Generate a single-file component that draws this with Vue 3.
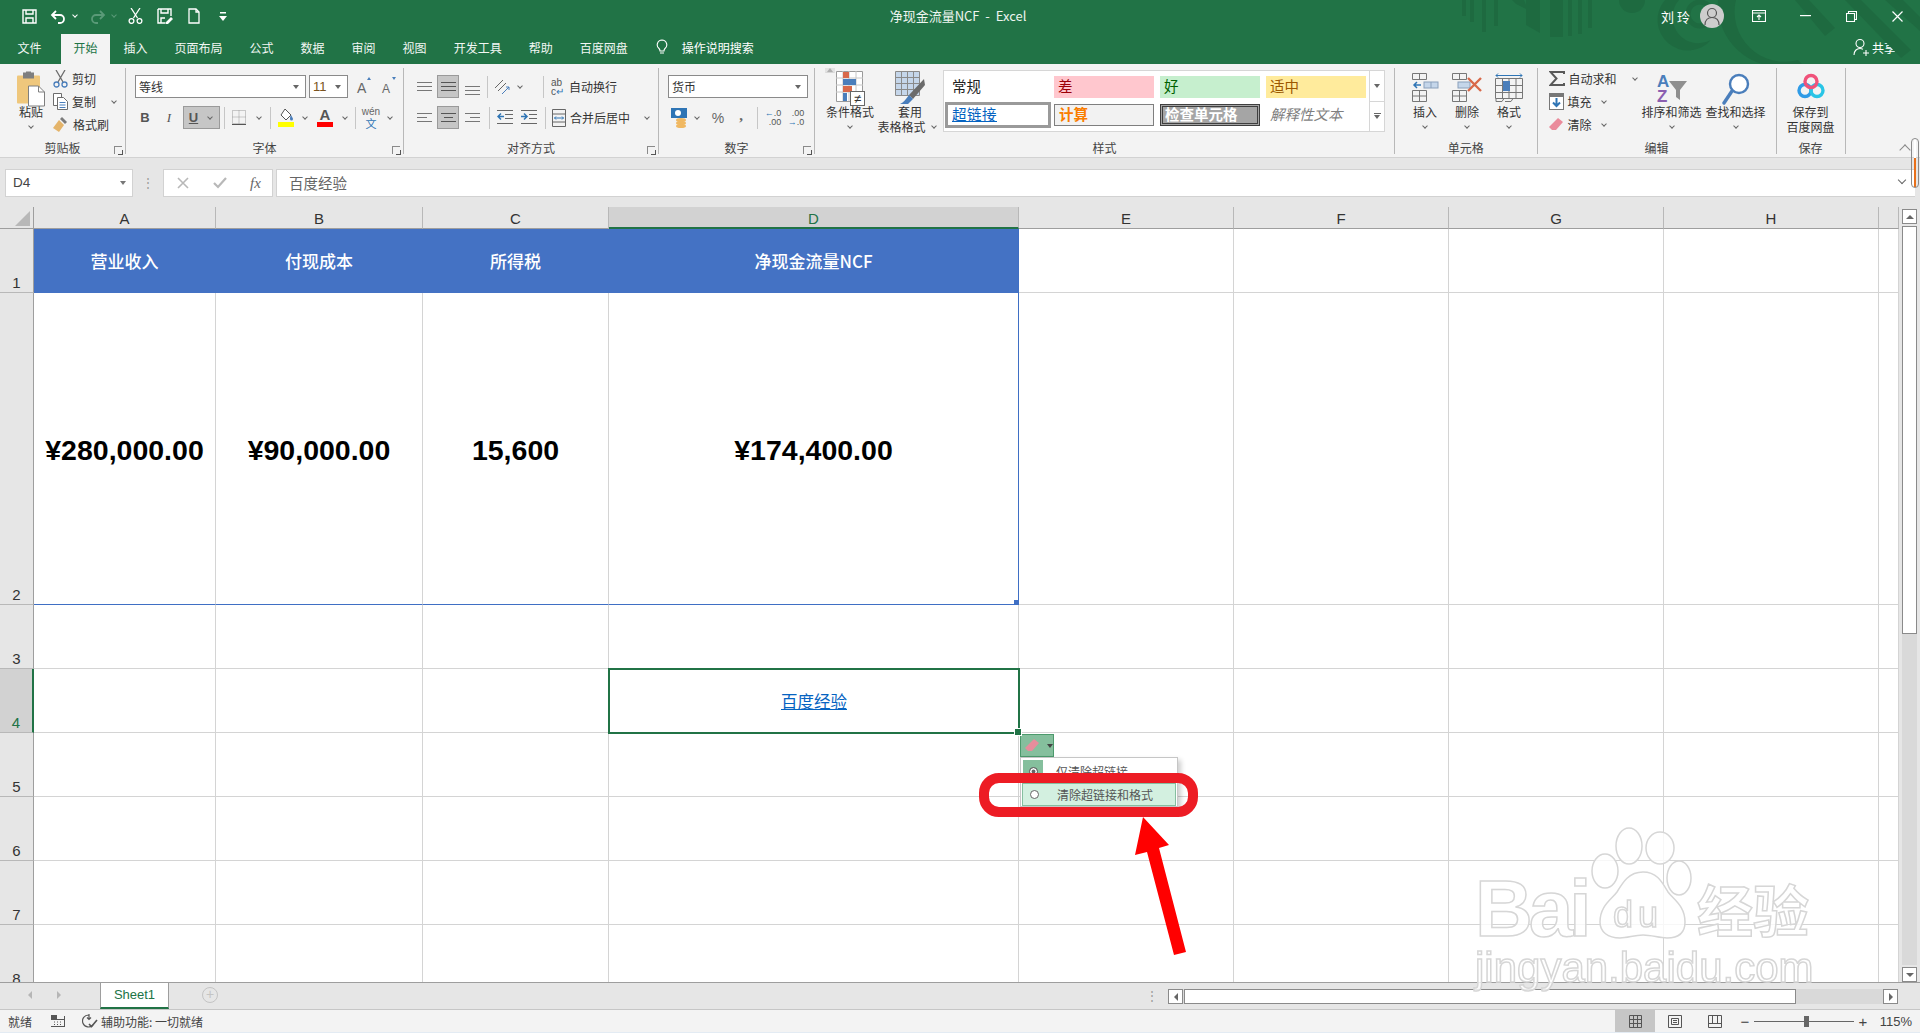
<script setup>
const cols = ['A', 'B', 'C', 'D', 'E', 'F', 'G', 'H', '']
const rows = [1, 2, 3, 4, 5, 6, 7, 8]

const content = {
  A1: '营业收入',
  B1: '付现成本',
  C1: '所得税',
  D1: '净现金流量NCF',
  A2: '¥280,000.00',
  B2: '¥90,000.00',
  C2: '15,600',
  D2: '¥174,400.00'
}

const tabs = ['插入', '页面布局', '公式', '数据', '审阅', '视图', '开发工具', '帮助', '百度网盘']

function cellClass(c, r) {
  const inRange = ['A', 'B', 'C', 'D'].includes(c)
  return {
    'head-cell': inRange && r === 1,
    'value-cell': inRange && r === 2,
    'range-right': c === 'D' && r <= 2,
    'active-cell': c === 'D' && r === 4
  }
}
</script>

<template>
  <div class="app">
    <!-- title bar -->
    <div class="titlebar">
      <svg class="deco" width="460" height="64" viewBox="0 0 460 64" fill="#1e6a40">
        <rect x="2" y="0" width="4" height="16" /><rect x="10" y="0" width="4" height="22" /><rect x="22" y="0" width="4" height="32" />
        <rect x="34" y="0" width="4" height="26" /><path d="M52 0h12l4 10-12-6z" /><path d="M66 0h14v33l-14-8z" />
        <rect x="90" y="0" width="13" height="37" /><rect x="108" y="0" width="4" height="36" /><rect x="118" y="0" width="4" height="34" /><rect x="128" y="0" width="4" height="28" />
        <circle cx="172" cy="0" r="13" />
        <path d="M205 0h14a26 26 0 0 0 32 40 30 30 0 0 1-46-40z" />
        <circle cx="240" cy="14" r="12" fill="none" stroke="#1e6a40" stroke-width="5" />
        <path d="M258 0h18a50 50 0 0 0 62 60l4 4h-40a62 62 0 0 1-44-64z" />
        <path d="M335 0h14l26 28-10 8z" /><path d="M385 0h16l50 50-10 8z" /><path d="M425 0h18l17 17v14z" />
      </svg>
      <div class="qat">
        <span class="qa">
          <svg width="15" height="15" viewBox="0 0 15 15" fill="none" stroke="#fff" stroke-width="1.4"><path d="M1 1h13v13H1z" /><path d="M4 1v4h7V1M4 14V9h7v5" /></svg>
        </span>
        <span class="qa">
          <svg width="17" height="15" viewBox="0 0 17 15" fill="none" stroke="#fff" stroke-width="1.8"><path d="M6 2L2 6l4 4M2 6h8a4 4 0 0 1 0 8H8" /></svg>
        </span>
        <span class="cw qa-c light"></span>
        <span class="qa dim">
          <svg width="17" height="15" viewBox="0 0 17 15" fill="none" stroke="#5a9a78" stroke-width="1.8"><path d="M11 2l4 4-4 4M15 6H7a4 4 0 0 0 0 8h2" /></svg>
        </span>
        <span class="cw qa-c dimc"></span>
        <span class="qa">
          <svg width="15" height="16" viewBox="0 0 15 16" fill="none" stroke="#fff" stroke-width="1.3"><path d="M3 0l6.5 10M12 0L5.500 10" /><circle cx="3.500" cy="13" r="2.400" /><circle cx="11.500" cy="13" r="2.400" /></svg>
        </span>
        <span class="qa">
          <svg width="16" height="16" viewBox="0 0 16 16" fill="none" stroke="#fff" stroke-width="1.4"><path d="M1 1h13v7M1 1v14h7" /><path d="M4 1v4h7V1M4 15v-5h4" /><path d="M9 15l5-5 1 1-5 5z" fill="#fff" /></svg>
        </span>
        <span class="qa">
          <svg width="12" height="16" viewBox="0 0 12 16" fill="none" stroke="#fff" stroke-width="1.3"><path d="M1 1h7l3 3v11H1z" /><path d="M8 1v3h3" /></svg>
        </span>
        <span class="qa">
          <svg width="8" height="9" viewBox="0 0 8 9" fill="#fff"><rect x="1" y="0" width="6" height="1.500" /><path d="M0 4h8L4 9z" /></svg>
        </span>
      </div>
      <div class="doc-title">{{ '净现金流量NCF  -  Excel' }}</div>
      <div class="win-controls">
        <span class="user">刘 玲</span>
        <span class="avatar">
          <svg width="24" height="24" viewBox="0 0 24 24" fill="none" stroke="#555" stroke-width="1.200"><circle cx="12" cy="9" r="4.500" /><path d="M5 21c0-5 3-7.500 7-7.500s7 2.500 7 7.500" /></svg>
        </span>
        <span class="wc first">
          <svg width="14" height="12" viewBox="0 0 14 12" fill="none" stroke="#fff" stroke-width="1.100"><path d="M.5.500h13v11H.5zM.5 3h13" /><path d="M7 10V5M5 7l2-2 2 2" /></svg>
        </span>
        <span class="wc">
          <svg width="11" height="2" viewBox="0 0 11 2"><rect width="11" height="1.200" fill="#fff" /></svg>
        </span>
        <span class="wc">
          <svg width="11" height="11" viewBox="0 0 11 11" fill="none" stroke="#fff" stroke-width="1.100"><path d="M.5 2.500h8v8h-8zM2.500 2.500v-2h8v8h-2" /></svg>
        </span>
        <span class="wc">
          <svg width="11" height="11" viewBox="0 0 11 11" stroke="#fff" stroke-width="1.200"><path d="M.5.500l10 10M10.500.500l-10 10" /></svg>
        </span>
      </div>
    </div>

    <!-- tabs -->
    <div class="tabbar">
      <span class="rtab file">文件</span>
      <span class="rtab active">开始</span>
      <span class="rtab" v-for="t in tabs" :key="t">{{ t }}</span>
      <span class="tell">
        <svg width="12" height="16" viewBox="0 0 12 16" fill="none" stroke="#fff" stroke-width="1.100"><path d="M6 1a4.800 4.800 0 0 0-3 8.500c.7.700 1 1.500 1 2.500h4c0-1 .3-1.800 1-2.500A4.800 4.800 0 0 0 6 1zM4 14h4" /></svg>
        操作说明搜索
      </span>
      <span class="share">
        <svg width="16" height="18" viewBox="0 0 16 18" fill="none" stroke="#fff" stroke-width="1.100"><circle cx="7" cy="5.500" r="4" /><path d="M1 17c0-4 2.500-6.500 6-6.500 1.200 0 2 .3 3 .8M10 15h6M13 12v6" /></svg>
        共享
      </span>
    </div>

    <!-- ribbon -->
    <div class="ribbon">
      <div class="group" style="width:126px">
        <div class="body clip">
          <div class="big paste">
            <svg width="28" height="36" viewBox="0 0 28 36">
              <rect x="0" y="4" width="23" height="28" rx="1" fill="#efc77c" />
              <rect x="6" y="1" width="11" height="6" fill="#7f7f7f" />
              <rect x="9" y="0" width="5" height="3" fill="#7f7f7f" />
              <path d="M11.500 14.500h10l6 6v14h-16z" fill="#fff" stroke="#7f7f7f" />
              <path d="M21.500 14.500v6h6" fill="none" stroke="#7f7f7f" />
            </svg>
            <span class="lbl">粘贴</span>
            <span class="cw"></span>
          </div>
          <div class="small-col">
            <div class="sm">
              <svg width="15" height="18" viewBox="0 0 15 18" fill="none" stroke-width="1.300"><path d="M3 0l7 12M12 0L5 12" stroke="#6d6d6d" /><circle cx="3.500" cy="14.500" r="2.500" stroke="#4a7ebb" /><circle cx="11.500" cy="14.500" r="2.500" stroke="#4a7ebb" /></svg>
              <span>剪切</span>
            </div>
            <div class="sm">
              <svg width="15" height="17" viewBox="0 0 15 17" fill="#fff" stroke="#6d6d6d"><path d="M.5.500h8v12h-8z" /><path d="M4.500 4.500h6l4 4v8h-10z" /><path d="M6.500 9.500h6M6.500 12h6M6.500 14.500h6" stroke="#4a7ebb" /></svg>
              <span>复制</span>
              <span class="cw copy-c"></span>
            </div>
            <div class="sm">
              <svg width="16" height="16" viewBox="0 0 16 16"><path d="M9 0l5 5-2 2-5-5z" fill="#7b7b7b" /><path d="M6 3l5 5-5 7-6-4z" fill="#e4b46a" /></svg>
              <span>格式刷</span>
            </div>
          </div>
        </div>
        <div class="glabel">剪贴板<i class="launch"></i></div>
      </div>

      <div class="group" style="width:278px">
        <div class="body stack">
          <div class="line">
            <div class="combo" style="width:171px">等线<i class="tri"></i></div>
            <div class="combo size" style="width:39px">11<i class="tri"></i></div>
            <span class="grow-a">A<i class="up"></i></span>
            <span class="grow-a small-a">A<i class="down"></i></span>
          </div>
          <div class="line">
            <span class="tb b" style="width:20px">B</span>
            <span class="tb i" style="width:28px">I</span>
            <span class="tb on u" style="width:37px"><u>U</u><span class="cw"></span></span>
            <i class="vsep" style="margin-left:4px"></i>
            <span class="tb" style="width:28px">
              <svg width="14" height="15" viewBox="0 0 14 15" fill="none" stroke="#9a9a9a" stroke-dasharray="1 1"><path d="M.5.500h13v13H.5zM7 .5v13M.5 7h13" /><path d="M0 14.500h14" stroke="#555" stroke-dasharray="none" /></svg>
            </span>
            <span class="cw" style="width:12px"></span>
            <i class="vsep" style="margin-left:5px"></i>
            <span class="tb" style="width:30px">
              <svg width="16" height="19" viewBox="0 0 16 19"><path d="M7 1l6 6-5 5-5-5z" fill="#fff" stroke="#555" /><path d="M13 7c1 2 2 3 2 4a1.500 1.500 0 0 1-3 0c0-1 0-2 1-4z" fill="#4a7ebb" /><rect y="14" width="16" height="5" fill="#ffff00" /></svg>
            </span>
            <span class="cw"></span>
            <span class="tb" style="width:32px">
              <svg width="16" height="19" viewBox="0 0 16 19"><text x="8" y="12" text-anchor="middle" class="font-a">A</text><rect y="14" width="16" height="5" fill="#ff0000" /></svg>
            </span>
            <span class="cw"></span>
            <i class="vsep" style="margin-left:6px"></i>
            <span class="tb wen" style="width:30px"><small>wén</small><b>文</b></span>
            <span class="cw"></span>
          </div>
        </div>
        <div class="glabel">字体<i class="launch"></i></div>
      </div>

      <div class="group" style="width:255px">
        <div class="body stack">
          <div class="line">
            <span class="ab"><svg width="15" height="10" viewBox="0 0 15 10" stroke="#777"><path d="M0 .5h15M0 4.500h15M0 8.500h15" /></svg></span>
            <span class="ab on"><svg width="15" height="10" viewBox="0 0 15 10" stroke="#555"><path d="M0 .5h15M0 4.500h15M0 8.500h15" /></svg></span>
            <span class="ab low"><svg width="15" height="10" viewBox="0 0 15 10" stroke="#777"><path d="M0 .5h15M0 4.500h15M0 8.500h15" /></svg></span>
            <i class="vsep" style="margin-left:4px"></i>
            <span class="tb" style="width:28px">
              <svg width="16" height="16" viewBox="0 0 16 16" fill="none" stroke="#666"><path d="M1 9l8-8M4 12l8-8" /><path d="M8 15l7-7M15 8v3M15 8h-3" stroke="#4a7ebb" /></svg>
            </span>
            <span class="cw"></span>
            <i class="vsep" style="margin-left:19px"></i>
            <div class="sm wrap-t">
              <span class="abc">ab<br />c<em>↵</em></span>
              <span>自动换行</span>
            </div>
          </div>
          <div class="line">
            <span class="ab"><svg width="15" height="10" viewBox="0 0 15 10" stroke="#777"><path d="M0 .5h15M0 4.500h10M0 8.500h15" /></svg></span>
            <span class="ab on"><svg width="15" height="10" viewBox="0 0 15 10" stroke="#555"><path d="M0 .5h15M3 4.500h9M0 8.500h15" /></svg></span>
            <span class="ab"><svg width="15" height="10" viewBox="0 0 15 10" stroke="#777"><path d="M0 .5h15M5 4.500h10M0 8.500h15" /></svg></span>
            <i class="vsep" style="margin-left:4px"></i>
            <span class="tb" style="width:24px;margin-left:3px">
              <svg width="16" height="15" viewBox="0 0 16 15" fill="none" stroke="#666"><path d="M0 .5h16M8 4.500h8M8 8.500h8M0 13.500h16" /><path d="M7 6.500H1M4 3.500l-3 3 3 3" stroke="#2f75b5" stroke-width="1.500" /></svg>
            </span>
            <span class="tb" style="width:24px">
              <svg width="16" height="15" viewBox="0 0 16 15" fill="none" stroke="#666"><path d="M0 .5h16M8 4.500h8M8 8.500h8M0 13.500h16" /><path d="M0 6.500h6M3 3.500l3 3-3 3" stroke="#2f75b5" stroke-width="1.500" /></svg>
            </span>
            <i class="vsep" style="margin-left:4px"></i>
            <div class="sm merge-t">
              <svg width="14" height="18" viewBox="0 0 14 18" fill="none" stroke="#666"><path d="M.5.500h13v17H.5zM.5 5h13M.5 13h13" /><path d="M2.500 9h9M4 7.500L2.500 9 4 10.500M10 7.500L11.500 9 10 10.500" stroke="#2f75b5" /></svg>
              <span>合并后居中</span>
              <span class="cw" style="margin-left:9px"></span>
            </div>
          </div>
        </div>
        <div class="glabel">对齐方式<i class="launch"></i></div>
      </div>

      <div class="group" style="width:156px">
        <div class="body stack">
          <div class="line"><div class="combo" style="width:140px">货币<i class="tri"></i></div></div>
          <div class="line">
            <span class="tb" style="width:22px">
              <svg width="16" height="20" viewBox="0 0 16 20"><rect x="0" y="0" width="16" height="10" fill="#2f75b5" /><circle cx="7" cy="5" r="3" fill="#fff" /><ellipse cx="10" cy="12" rx="5" ry="2" fill="#f0b862" /><ellipse cx="10" cy="15" rx="5" ry="2" fill="#f0b862" /><ellipse cx="10" cy="18" rx="5" ry="2" fill="#f0b862" /></svg>
            </span>
            <span class="cw" style="margin-left:3px"></span>
            <span class="tb pct" style="width:34px">%</span>
            <span class="tb comma" style="width:12px">,</span>
            <i class="vsep" style="margin-left:10px"></i>
            <span class="tb dec" style="width:30px"><span><em>←</em>.0<br />.00</span></span>
            <span class="tb dec" style="width:16px"><span>.00<br /><em>→</em>.0</span></span>
          </div>
        </div>
        <div class="glabel">数字<i class="launch"></i></div>
      </div>

      <div class="group" style="width:580px">
        <div class="body styles">
          <div class="big" style="width:56px">
            <svg width="29" height="37" viewBox="0 0 29 37">
              <path d="M.5.500h26v30H.5z" fill="#fff" stroke="#9a9a9a" /><path d="M7 0v30M13 0v30M20 0v30M0 7h27M0 14h27M0 21h27" stroke="#c6c6c6" />
              <rect x="7" y="1" width="6" height="6" fill="#d8694a" /><rect x="7" y="8" width="13" height="6" fill="#4a7ebb" /><rect x="7" y="15" width="9" height="6" fill="#d8694a" /><rect x="7" y="22" width="4" height="8" fill="#4a7ebb" />
              <rect x="14.500" y="20.500" width="14" height="14" fill="#fff" stroke="#666" /><text x="21.500" y="32" text-anchor="middle" class="ne">≠</text>
            </svg>
            <span class="lbl">条件格式</span>
            <span class="cw"></span>
          </div>
          <div class="big" style="width:64px">
            <svg width="30" height="37" viewBox="0 0 30 37">
              <path d="M.5.500h24v24H.5z" fill="#c5d6ea" stroke="#8a8a8a" /><path d="M.5 6.500h24M.5 12.500h24M.5 18.500h24M6.500 0v25M12.500 0v25M18.500 0v25" stroke="#8a8a8a" />
              <path d="M29 8l1 6-12 14-4-4z" fill="#6b6b6b" /><path d="M14 24l4 4-5 5H5c3-1 6-5 9-9z" fill="#4a7ebb" />
            </svg>
            <span class="lbl">套用</span>
            <span class="lbl nowrap">表格格式<span class="cw inline-c"></span></span>
          </div>
          <div class="gallery">
            <div class="gal-grid">
              <div class="st st-normal">常规</div>
              <div class="st st-bad">差</div>
              <div class="st st-good">好</div>
              <div class="st st-neutral">适中</div>
              <div class="st st-link"><u>超链接</u></div>
              <div class="st st-calc">计算</div>
              <div class="st st-check">检查单元格</div>
              <div class="st st-note">解释性文本</div>
            </div>
            <div class="gal-scroll">
              <span class="gs up"><i></i></span>
              <span class="gs"><i></i></span>
              <span class="gs more"><i></i></span>
            </div>
          </div>
        </div>
        <div class="glabel">样式</div>
      </div>

      <div class="group" style="width:142.500px">
        <div class="body cells-b">
          <div class="big" style="width:42px">
            <svg width="27" height="33" viewBox="0 0 27 33" fill="none" stroke="#777">
              <path d="M.5.500h14v6H.5zM7.500.5v6M.5 17.500h14v11H.5zM.5 23h14M7.500 17.500v11" />
              <rect x="12" y="9" width="14" height="6" fill="#c5d6ea" stroke="#8aa0bb" /><path d="M19 9v6" stroke="#8aa0bb" /><path d="M9 12H2M5 9l-3 3 3 3" stroke="#2f75b5" stroke-width="1.500" />
            </svg>
            <span class="lbl">插入</span>
            <span class="cw"></span>
          </div>
          <div class="big" style="width:42px">
            <svg width="30" height="33" viewBox="0 0 30 33" fill="none" stroke="#777">
              <path d="M.5.500h14v6H.5zM7.500.5v6M.5 17.500h14v11H.5zM.5 23h14M7.500 17.500v11" />
              <rect x="6" y="9" width="12" height="6" fill="#c5d6ea" stroke="#8aa0bb" /><path d="M16 5l13 13M29 5L16 18" stroke="#d8694a" stroke-width="2.400" />
            </svg>
            <span class="lbl">删除</span>
            <span class="cw"></span>
          </div>
          <div class="big" style="width:42px">
            <svg width="28" height="33" viewBox="0 0 28 33" fill="none" stroke="#777">
              <path d="M.5 5.500h27v20H.5zM7.500 5.500v20M14 5.500v20M21 5.500v20M.5 12.500h27M.5 19.500h27" />
              <rect x="8" y="8" width="7" height="10" fill="#4a7ebb" stroke="none" />
              <path d="M1 2.500h26M3 .5l-2 2 2 2M25 .5l2 2-2 2" stroke="#2f75b5" />
              <path d="M1 25.500v3h6l2-3M10 28.500h6l2-3" />
            </svg>
            <span class="lbl">格式</span>
            <span class="cw"></span>
          </div>
        </div>
        <div class="glabel">单元格</div>
      </div>

      <div class="group" style="width:239px">
        <div class="body edit">
          <div class="small-col edit-col">
            <div class="sm">
              <svg width="16" height="15" viewBox="0 0 16 15" fill="none" stroke="#595959" stroke-width="2"><path d="M15 3V1H1.500l6 6.500-6 6.500H15v-2" /></svg>
              <span>自动求和</span>
              <span class="cw" style="margin-left:10px"></span>
            </div>
            <div class="sm">
              <svg width="15" height="17" viewBox="0 0 15 17"><rect x=".5" y=".5" width="14" height="16" fill="#fff" stroke="#777" /><rect x="1" y="1" width="13" height="3" fill="#777" /><path d="M7.500 5v8M4 9.500l3.500 3.500 3.500-3.500" fill="none" stroke="#2f75b5" stroke-width="2" /></svg>
              <span>填充</span>
              <span class="cw" style="margin-left:4px"></span>
            </div>
            <div class="sm">
              <svg width="15" height="15" viewBox="0 0 15 15"><path d="M9 1l5 4-7 8H3l-3-3z" fill="#ea8b9b" /></svg>
              <span>清除</span>
              <span class="cw" style="margin-left:4px"></span>
            </div>
          </div>
          <div class="big" style="width:62px">
            <svg width="30" height="33" viewBox="0 0 30 33">
              <text x="0" y="14" class="az az-a">A</text><text x="0" y="29" class="az az-z">Z</text>
              <path d="M12 8h18l-7 9v10l-4-3v-7z" fill="#8f8f8f" />
            </svg>
            <span class="lbl">排序和筛选</span>
            <span class="cw"></span>
          </div>
          <div class="big" style="width:62px;margin-left:2px">
            <svg width="28" height="33" viewBox="0 0 28 33" fill="none">
              <circle cx="17" cy="11" r="9" stroke="#4a7ebb" stroke-width="2.400" fill="#fff" /><path d="M10 18L2 30" stroke="#4a7ebb" stroke-width="3.400" stroke-linecap="round" />
            </svg>
            <span class="lbl">查找和选择</span>
            <span class="cw"></span>
          </div>
        </div>
        <div class="glabel">编辑</div>
      </div>

      <div class="group" style="width:69px">
        <div class="body">
          <div class="big" style="width:68px">
            <svg width="28" height="36" viewBox="0 0 28 36" fill="none" stroke-width="3.400">
              <circle cx="8" cy="19" r="6" stroke="#2f9be6" /><circle cx="20" cy="19" r="6" stroke="#29c5e6" /><circle cx="14" cy="10" r="6" stroke="#f0527a" />
            </svg>
            <span class="lbl">保存到</span>
            <span class="lbl">百度网盘</span>
          </div>
        </div>
        <div class="glabel">保存</div>
      </div>
      <i class="collapse"></i>
    </div>

    <!-- formula bar -->
    <div class="fbar">
      <div class="namebox">D4<i class="tri"></i></div>
      <div class="grip">⋮</div>
      <div class="fxbox">
        <svg class="fx-x" width="12" height="12" viewBox="0 0 12 12" stroke="#b8b8b8" stroke-width="1.600"><path d="M1 1l10 10M11 1L1 11" /></svg>
        <svg class="fx-ok" width="14" height="12" viewBox="0 0 14 12" fill="none" stroke="#b8b8b8" stroke-width="2.200"><path d="M1 6l4 4 8-9" /></svg>
        <span class="fx-f">fx</span>
      </div>
      <div class="finput">百度经验<i class="f-exp"></i></div>
    </div>

    <!-- sheet -->
    <div class="sheet">
      <div class="grid">
        <div class="corner"><svg width="15" height="15" viewBox="0 0 15 15"><path d="M15 0v15H0z" fill="#b8b8b8" /></svg></div>
        <div v-for="c in cols" :key="c" class="col-head" :class="{ sel: c === 'D' }">{{ c }}</div>
        <template v-for="r in rows" :key="r">
          <div class="row-head" :class="{ sel: r === 4 }">{{ r }}</div>
          <div v-for="c in cols" :key="c + r" class="cell" :class="cellClass(c, r)">
            <span v-if="c === 'D' && r === 4" class="link">百度经验</span>
            <template v-else>{{ content[c + r] }}</template>
          </div>
        </template>
      </div>
      <div class="vscroll">
        <span class="sbtn"><i class="t-up"></i></span>
        <div class="vtrack"><div class="vthumb"></div></div>
        <span class="sbtn"><i class="t-down"></i></span>
      </div>
    </div>

    <!-- sheet tabs and horizontal scrollbar -->
    <div class="sheetbar">
      <span class="nav"><i class="t-left"></i></span>
      <span class="nav"><i class="t-right"></i></span>
      <div class="sheet-tab">Sheet1</div>
      <span class="add">+</span>
      <span class="bar-dots">⋮</span>
      <div class="hscroll">
        <span class="sbtn"><i class="t-left dark"></i></span>
        <div class="hthumb"></div>
        <span class="sbtn"><i class="t-right dark"></i></span>
      </div>
    </div>

    <!-- status bar -->
    <div class="status">
      <span class="st-ready">就绪</span>
      <svg class="st-macro" width="14" height="12" viewBox="0 0 14 12"><rect x="0" y="0" width="6" height="4" fill="#555" /><path d="M0 4.500h14M0 11.500h14M13.500 1v11M3 7h1M6 7h1M9 7h1M3 9.500h1M6 9.500h1M9 9.500h1" stroke="#555" fill="none" /></svg>
      <svg class="st-acc" width="16" height="15" viewBox="0 0 16 15" fill="none" stroke="#555" stroke-width="1.200"><path d="M7 1a6 6 0 1 0 4 10M7 0v5M5 3.500L7 5.500l2-2" /><path d="M7 10l2.500 2.500L15 6" stroke-width="1.600" /></svg>
      <span>辅助功能: 一切就绪</span>
      <div class="views">
        <span class="vb on"><svg width="13" height="13" viewBox="0 0 13 13" fill="none" stroke="#555"><path d="M.5.500h12v12H.5zM4.500.5v12M8.500.5v12M.5 4.500h12M.5 8.500h12" /></svg></span>
        <span class="vb"><svg width="14" height="13" viewBox="0 0 14 13" fill="none" stroke="#555"><path d="M.5.500h13v12H.5zM3.500 3.500h7v6h-7zM5 5.500h4M5 7.500h4" /></svg></span>
        <span class="vb"><svg width="14" height="13" viewBox="0 0 14 13" fill="none" stroke="#555"><path d="M.5.500h13v12H.5zM.5 8.500h13M4.500.5v8M9.500.5v8" /></svg></span>
        <span class="zm-sign first">−</span>
        <div class="slider"><i></i></div>
        <span class="zm-sign">+</span>
        <span class="zm-val">115%</span>
      </div>
    </div>

    <!-- stuff floating over the sheet -->
    <div class="paste-btn">
      <svg width="15" height="13" viewBox="0 0 15 13"><path d="M9 0l5 4-7 8H3l-3-3z" fill="#e68d9c" /></svg>
      <i class="tri dark-tri"></i>
    </div>
    <div class="paste-menu">
      <div class="pm-row">
        <span class="pm-radio on"><i class="dot"></i></span>
        <span>仅清除超链接</span>
      </div>
      <div class="pm-row hot">
        <span class="pm-radio"><i></i></span>
        <span>清除超链接和格式</span>
      </div>
    </div>
    <div class="red-box"></div>
    <svg class="red-arrow" width="60" height="150" viewBox="0 0 60 150">
      <path d="M8 5L34 33 24 36 51 140 39 143 12 40 0 43z" fill="#ff0000" />
    </svg>
    <svg class="watermark" width="360" height="190" viewBox="0 0 360 190">
      <g class="wm">
        <text x="2" y="116" class="wm-big">Bai</text>
        <ellipse cx="156" cy="26" rx="13" ry="18" /><ellipse cx="187" cy="28" rx="14" ry="16" />
        <ellipse cx="132" cy="51" rx="13" ry="17" /><ellipse cx="206" cy="58" rx="12" ry="17" />
        <path d="M170 52c-14 0-20 10-26 20-6 8-17 14-17 30 0 10 8 16 20 16 8 0 14-3 23-3s16 3 24 3c12 0 18-6 18-16 0-16-11-22-17-30-6-10-11-20-25-20z" />
        <text x="140" y="107" class="wm-du">du</text>
        <text x="224" y="112" class="wm-cn">经验</text>
        <text x="2" y="162" class="wm-url">jingyan.baidu.com</text>
      </g>
    </svg>
    <div class="handle"></div>
  </div>
</template>

<style scoped>
.app {
  position: relative;
  width: 1920px;
  height: 1033px;
  overflow: hidden;
  display: flex;
  flex-direction: column;
  font-family: "Noto Sans CJK SC", "Noto Sans", sans-serif;
  font-size: 12px;
  color: #444;
  background: #f3f3f3;
}

/* title bar */
.titlebar {
  position: relative;
  height: 32px;
  flex: none;
  display: grid;
  grid-template-columns: 1fr auto 1fr;
  align-items: center;
  padding-right: 4px;
  background: #217346;
  color: #fff;
}
.deco {
  position: absolute;
  right: 0;
  top: 0;
}
.qat {
  display: flex;
  align-items: center;
  padding-left: 15px;
  position: relative;
}
.qa {
  width: 29px;
  display: flex;
  justify-content: center;
}
.qa-c { width: 8px; margin: 0 3.500px 0 -2px; }
.doc-title {
  white-space: pre;
  position: relative;
  font-size: 13px;
  line-height: 28px;
  color: #eef5f0;
}
.win-controls {
  position: relative;
  display: flex;
  align-items: center;
  justify-content: flex-end;
  margin-right: -4px;
}
.user { margin-right: 10px; font-size: 13px; }
.avatar {
  width: 24px;
  height: 24px;
  border-radius: 50%;
  background: #cdcdcd;
  overflow: hidden;
}
.wc {
  width: 46px;
  display: flex;
  justify-content: center;
}
.wc.first { margin-left: 12px; }

/* ribbon tabs */
.tabbar {
  height: 32px;
  flex: none;
  display: flex;
  align-items: stretch;
  padding-left: 4px;
  background: #217346;
  color: #fff;
}
.rtab {
  padding: 0 13.500px;
  line-height: 28px;
  margin-top: 2px;
  white-space: nowrap;
  color: #f2f7f4;
}
.rtab.file { margin-right: 6px; }
.rtab.active {
  padding: 0 12.500px;
  background: #f3f3f3;
  color: #217346;
}
.tell {
  display: flex;
  align-items: center;
  gap: 14px;
  margin-left: 14.500px;
  padding-bottom: 2px;
}
.share {
  margin-left: auto;
  margin-right: 24px;
  padding-bottom: 2px;
  display: flex;
  align-items: center;
  gap: 3px;
}

/* ribbon */
.ribbon {
  position: relative;
  height: 94px;
  flex: none;
  display: flex;
  padding: 4px 0 3px;
  box-sizing: border-box;
  background: #f3f3f3;
  border-bottom: 1px solid #d2d2d2;
}
.group {
  position: relative;
  display: flex;
  flex-direction: column;
  flex: none;
  box-sizing: border-box;
  border-right: 1px solid #b8b8b8;
}
.body {
  flex: 1;
  min-height: 0;
}
.glabel {
  position: relative;
  height: 14px;
  line-height: 15px;
  text-align: center;
  color: #444;
}
.launch {
  position: absolute;
  right: 3px;
  bottom: 0;
  width: 7px;
  height: 7px;
  border: 1px solid #8a8a8a;
  border-width: 1px 0 0 1px;
}
.launch::after {
  content: "";
  position: absolute;
  right: -1px;
  bottom: -1px;
  width: 4px;
  height: 4px;
  border: solid #555;
  border-width: 0 1px 1px 0;
}
.stack {
  display: flex;
  flex-direction: column;
  gap: 8px;
  padding: 7px 0 0 9px;
}
.line {
  height: 23px;
  display: flex;
  align-items: center;
}
.combo {
  position: relative;
  height: 23px;
  box-sizing: border-box;
  flex: none;
  margin-right: 3px;
  padding-left: 3px;
  line-height: 21px;
  background: #fff;
  border: 1px solid #8a8a8a;
  color: #333;
}
.combo.size { padding-left: 3px; font-family: "Liberation Sans", sans-serif; font-size: 13px; color: #7a5320; }
.combo .tri { position: absolute; right: 6px; top: 9px; }
.tri {
  display: inline-block;
  width: 0;
  height: 0;
  border-left: 3.500px solid transparent;
  border-right: 3.500px solid transparent;
  border-top: 4px solid #666;
}
.grow-a {
  position: relative;
  width: 25px;
  margin-left: 6px;
  font: 14px "Liberation Sans", sans-serif;
  color: #666;
  padding-top: 3px;
}
.small-a { width: 14px; margin-left: 0; font-size: 12px; padding-top: 5px; }
.up, .down {
  position: absolute;
  left: 10px;
  top: 0;
  border-left: 2.500px solid transparent;
  border-right: 2.500px solid transparent;
  border-bottom: 3px solid #4a7ebb;
}
.down { border-bottom: 0; border-top: 3px solid #4a7ebb; }
.vsep {
  width: 1px;
  height: 22px;
  flex: none;
  background: #c6c6c6;
}
.tb {
  flex: none;
  height: 23px;
  box-sizing: border-box;
  display: flex;
  align-items: center;
  justify-content: center;
  color: #555;
}
.tb.on {
  background: #c6c6c6;
  border: 1px solid #9a9a9a;
}
.b { font: bold 13px "Liberation Sans", sans-serif; }
.i { font: italic 13px "Liberation Serif", serif; }
.u { font: bold 13px "Liberation Sans", sans-serif; gap: 8px; }
.cw {
  flex: none;
  width: 8px;
  height: 8px;
  display: flex;
  align-items: center;
  justify-content: center;
}
.cw::after {
  content: "";
  width: 3px;
  height: 3px;
  margin-top: -2px;
  border: solid #666;
  border-width: 0 1px 1px 0;
  transform: rotate(45deg);
}
.light::after { border-color: #fff; }
.dimc::after { border-color: #5a9a78; }
.wen { flex-direction: column; line-height: 9px; }
.wen small { font: 10px "Liberation Sans", sans-serif; color: #666; }
.wen b { font-weight: 400; font-size: 11px; color: #2f75b5; line-height: 12px; }
.font-a { font: bold 15px "Liberation Sans", sans-serif; fill: #555; }
.ab {
  width: 22px;
  height: 23px;
  box-sizing: border-box;
  flex: none;
  margin-right: 2px;
  display: flex;
  align-items: center;
  justify-content: center;
}
.ab.on {
  background: #c6c6c6;
  border: 1px solid #9a9a9a;
}
.ab.low { padding-top: 8px; margin-right: 0; }
.wrap-t { margin-left: 7px; }
.merge-t { margin-left: 6px; gap: 3px; }
.abc {
  width: 14px;
  font: 10px/9px "Liberation Sans", sans-serif;
  color: #555;
}
.abc em { font-style: normal; color: #2f75b5; }
.pct { font: 14px "Liberation Sans", sans-serif; color: #666; }
.comma { font: bold 15px/10px "Liberation Serif", serif; color: #666; padding-bottom: 6px; }
.dec { font: 9px/9px "Liberation Sans", sans-serif; color: #555; text-align: right; }
.dec em { font-style: normal; color: #2f75b5; }

/* clipboard */
.clip {
  display: flex;
}
.big {
  flex: none;
  display: flex;
  flex-direction: column;
  align-items: center;
  padding-top: 3px;
}
.big svg {
  height: 37px;
  flex: none;
  margin-bottom: -4px;
}
.lbl {
  height: 15px;
  line-height: 15px;
  white-space: nowrap;
  color: #333;
}
.nowrap { display: flex; align-items: center; margin-right: 5px; }
.inline-c { margin-left: 4px; }
.big > .cw { height: 15px; }
.paste {
  width: 48px;
  margin-left: 7px;
}
.small-col {
  display: flex;
  flex-direction: column;
  margin: -1px 0 0 -2px;
}
.sm {
  height: 23px;
  display: flex;
  align-items: center;
  gap: 4px;
  white-space: nowrap;
  color: #333;
}
.copy-c { margin-left: 10px; }

/* styles */
.styles {
  display: flex;
  padding-left: 7px;
}
.gallery {
  display: flex;
  width: 442px;
  height: 62px;
  margin: 2px 0 0 1px;
  box-sizing: border-box;
  padding: 5px 0 0 5px;
  background: #fff;
  border: 1px solid #d6d6d6;
}
.gal-grid {
  display: grid;
  grid-template-columns: repeat(4, 100px);
  grid-template-rows: 22px 22px;
  gap: 6px;
  margin-left: -1px;
}
.st {
  box-sizing: border-box;
  padding-left: 4px;
  font-size: 14.500px;
  line-height: 20px;
  white-space: nowrap;
  overflow: hidden;
  color: #222;
}
.st-bad { background: #ffc7ce; color: #9c0006; }
.st-good { background: #c6efce; color: #006100; }
.st-neutral { background: #ffeb9c; color: #9c5700; }
.st-link { color: #0563c1; background: #fff; box-shadow: 0 0 0 3px #9a9a9a; margin: 1px 0; line-height: 18px; letter-spacing: .5px; }
.st-calc { background: #f2f2f2; border: 1px solid #7f7f7f; color: #fa7d00; font-weight: 700; line-height: 18px; }
.st-check { background: #a5a5a5; border: 1px solid #3f3f3f; outline: 1px solid #3f3f3f; outline-offset: -3px; color: #fff; font-weight: 700; line-height: 18px; }
.st-note { color: #7f7f7f; font-style: italic; }
.gal-scroll {
  width: 15px;
  display: flex;
  flex-direction: column;
  margin: -5px 0 0 3px;
  border-left: 1px solid #d6d6d6;
}
.gs {
  flex: 1;
  display: flex;
  flex-direction: column;
  gap: 1px;
  align-items: center;
  justify-content: center;
  border-bottom: 1px solid #d6d6d6;
}
.gs i {
  width: 0;
  height: 0;
  border-left: 3.500px solid transparent;
  border-right: 3.500px solid transparent;
  border-top: 4px solid #666;
}
.gs.up { background: #e2e2e2; }
.gs.up i { border-top: 0; border-bottom: 4px solid #b0b0b0; }
.gs.more { border-bottom: 0; }
.gs.more::before {
  content: "";
  width: 7px;
  height: 1px;
  background: #666;
}

.cells-b {
  display: flex;
  padding-left: 9px;
}
.edit {
  display: flex;
}
.edit-col {
  width: 100px;
  margin-left: 11px;
  margin-right: -8px;
  flex: none;
}
.az { font: bold 17px "Liberation Sans", sans-serif; }
.az-a { fill: #4a7ebb; }
.az-z { fill: #8b5fb0; }
.ne { font: 13px "Liberation Sans", sans-serif; fill: #333; }
.collapse {
  position: absolute;
  right: 11px;
  bottom: 3px;
  width: 7px;
  height: 7px;
  border: solid #888;
  border-width: 1px 0 0 1px;
  transform: rotate(45deg);
}

/* formula bar */
.fbar {
  height: 49px;
  flex: none;
  box-sizing: border-box;
  display: flex;
  padding: 11px 5px 10px;
  background: #e6e6e6;
}
.namebox, .fxbox, .finput {
  position: relative;
  box-sizing: border-box;
  background: #fff;
  border: 1px solid #d2d2d2;
  line-height: 26px;
}
.namebox {
  width: 128px;
  padding-left: 7px;
  font: 13.500px/26px "Liberation Sans", sans-serif;
  color: #444;
}
.namebox .tri { position: absolute; right: 6px; top: 11px; border-top-color: #777; }
.grip {
  width: 30px;
  text-align: center;
  color: #9a9a9a;
  line-height: 26px;
}
.fxbox {
  width: 110px;
  display: flex;
  align-items: center;
}
.fx-x { margin-left: 13px; }
.fx-ok { margin-left: 24px; }
.fx-f { margin-left: 23px; font: italic 15px "Liberation Serif", serif; color: #666; }
.finput {
  width: 1639px;
  margin-left: 3px;
  padding-left: 12px;
  font-size: 14.500px;
  color: #666;
  border-right: 0;
}
.f-exp {
  position: absolute;
  right: 10px;
  top: 7px;
  width: 5px;
  height: 5px;
  border: solid #666;
  border-width: 0 1.500px 1.500px 0;
  transform: rotate(45deg);
}

/* sheet */
.sheet {
  flex: 1;
  min-height: 0;
  display: flex;
  overflow: hidden;
  background: #fff;
}
.grid {
  width: 1899px;
  flex: none;
  display: grid;
  grid-template-columns: 34px 182px 207px 186px 410px 215px 215px 215px 215px 20px;
  grid-template-rows: 22px 64px 312px repeat(6, 64px);
  font-family: "Liberation Sans", sans-serif;
}
.corner {
  background: #e6e6e6;
  border-right: 1px solid #9e9e9e;
  border-bottom: 1px solid #9e9e9e;
  box-sizing: border-box;
  padding: 4px 0 0 15px;
}
.col-head {
  box-sizing: border-box;
  background: #e6e6e6;
  border-right: 1px solid #b8b8b8;
  border-bottom: 1px solid #9e9e9e;
  text-align: center;
  font-size: 15px;
  line-height: 24px;
  color: #333;
}
.col-head.sel {
  background: #d2d2d2;
  color: #217346;
  border-bottom: 2px solid #217346;
}
.row-head {
  box-sizing: border-box;
  background: #e6e6e6;
  border-right: 1px solid #9e9e9e;
  border-bottom: 1px solid #b8b8b8;
  display: flex;
  align-items: flex-end;
  justify-content: center;
  font-size: 15px;
  line-height: 19px;
  color: #333;
}
.row-head.sel {
  background: #d2d2d2;
  color: #217346;
  border-right: 2px solid #217346;
}
.cell {
  position: relative;
  box-sizing: border-box;
  display: flex;
  align-items: center;
  justify-content: center;
  border-right: 1px solid #d4d4d4;
  border-bottom: 1px solid #d4d4d4;
  color: #000;
  white-space: nowrap;
}
.head-cell {
  background: #4472c4;
  border-right-color: #4472c4;
  border-bottom-color: #4472c4;
  color: #fff;
  font-family: "Noto Sans CJK SC", sans-serif;
  font-size: 17px;
  font-weight: 500;
}
.value-cell {
  padding-top: 3px;
  font-size: 28.500px;
  font-weight: 700;
  border-bottom: 1px solid #3f6fc4;
}
.range-right { border-right: 1px solid #3f6fc4; }
.value-cell.range-right::after {
  content: "";
  position: absolute;
  right: -1px;
  bottom: -1px;
  width: 5px;
  height: 5px;
  background: #3f6fc4;
}
.active-cell {
  z-index: 1;
  border: 2px solid #217346;
  margin: -1px;
}
.active-cell::after {
  content: "";
  position: absolute;
  right: -4px;
  bottom: -4px;
  width: 6px;
  height: 6px;
  background: #217346;
  border: 1px solid #fff;
}
.link {
  font-family: "Noto Sans CJK SC", sans-serif;
  font-size: 16.500px;
  color: #0563c1;
  text-decoration: underline;
}
.vscroll {
  flex: 1;
  box-sizing: border-box;
  padding: 2px 3px 0 3px;
  display: flex;
  flex-direction: column;
  background: #e6e6e6;
}
.sbtn {
  flex: none;
  width: 15px;
  height: 15px;
  box-sizing: border-box;
  display: flex;
  align-items: center;
  justify-content: center;
  background: #fff;
  border: 1px solid #8a8a8a;
}
.vtrack {
  flex: 1;
  margin: 2px 0;
  background: #d9d9d9;
}
.vthumb {
  height: 408px;
  box-sizing: border-box;
  background: #fff;
  border: 1px solid #8a8a8a;
}
.t-up, .t-down, .t-left, .t-right {
  width: 0;
  height: 0;
  border: 4px solid transparent;
}
.t-up { border-top: 0; border-bottom-color: #666; }
.t-down { border-bottom: 0; border-top-color: #666; }
.t-left { border-left: 0; border-right-color: #b6b6b6; }
.t-right { border-right: 0; border-left-color: #b6b6b6; }
.dark.t-left { border-right-color: #666; }
.dark.t-right { border-left-color: #666; }

/* sheet tabs */
.sheetbar {
  height: 28px;
  flex: none;
  box-sizing: border-box;
  display: flex;
  align-items: flex-start;
  padding-left: 15px;
  background: #e6e6e6;
  border-top: 1px solid #9e9e9e;
  border-bottom: 1px solid #c6c6c6;
}
.nav {
  width: 29px;
  height: 24px;
  display: flex;
  align-items: center;
  justify-content: center;
}
.sheet-tab {
  width: 69px;
  height: 26px;
  margin-left: 27px;
  box-sizing: border-box;
  background: #fff;
  border: solid #9e9e9e;
  border-width: 0 1px;
  border-bottom: 2px solid #217346;
  text-align: center;
  font: 13px/24px "Liberation Sans", sans-serif;
  color: #217346;
}
.add {
  width: 16px;
  height: 16px;
  margin: 4px 0 0 33px;
  box-sizing: border-box;
  border: 1px solid #c4c4c4;
  border-radius: 50%;
  text-align: center;
  font: 14px/13px "Liberation Sans", sans-serif;
  color: #c4c4c4;
}
.bar-dots {
  margin-left: 928px;
  line-height: 24px;
  color: #9a9a9a;
}
.hscroll {
  display: flex;
  width: 730px;
  height: 15px;
  margin: 6px 0 0 10px;
  background: #d9d9d9;
}
.hscroll .sbtn { width: 15px; }
.hthumb {
  width: 612px;
  margin-left: 1px;
  margin-right: auto;
  box-sizing: border-box;
  background: #fff;
  border: 1px solid #8a8a8a;
}

/* status bar */
.status {
  height: 23px;
  flex: none;
  box-sizing: border-box;
  display: flex;
  align-items: center;
  padding-left: 8px;
  background: #f3f3f3;
  border-bottom: 1px solid #e3ebf3;
  color: #444;
}
.st-macro { margin-left: 19px; }
.st-acc { margin: 0 3px 0 17px; }
.views {
  margin-left: auto;
  height: 100%;
  display: flex;
  align-items: center;
}
.vb {
  width: 40px;
  height: 100%;
  display: flex;
  align-items: center;
  justify-content: center;
}
.vb.on { background: #c6c6c6; }
.zm-sign {
  width: 10px;
  text-align: center;
  font: 15px "Liberation Sans", sans-serif;
  color: #444;
}
.zm-sign.first { margin-left: 5px; margin-right: 4px; }
.slider {
  position: relative;
  width: 100px;
  height: 1px;
  margin-right: 4px;
  background: #666;
}
.slider i {
  position: absolute;
  left: 50px;
  top: -5px;
  width: 5px;
  height: 11px;
  background: #666;
}
.zm-val {
  width: 52px;
  padding-right: 8px;
  box-sizing: border-box;
  text-align: right;
  font: 13px "Liberation Sans", sans-serif;
}

/* overlays */
.paste-btn {
  position: absolute;
  left: 1020px;
  top: 734px;
  width: 34px;
  height: 23px;
  box-sizing: border-box;
  display: flex;
  align-items: center;
  gap: 7px;
  padding-left: 4px;
  background: #85bf9d;
  border: 1px solid #4c9a6c;
}
.dark-tri { border-top-color: #444; }
.paste-menu {
  position: absolute;
  left: 1020px;
  top: 757px;
  width: 158px;
  height: 50px;
  box-sizing: border-box;
  padding: 2px 1px 0;
  background: #fff;
  border: 1px solid #c6c6c6;
  box-shadow: 3px 3px 5px rgba(0, 0, 0, .2);
}
.pm-row {
  height: 23px;
  display: flex;
  align-items: center;
  padding-left: 1px;
  color: #555;
}
.pm-row.hot {
  box-sizing: border-box;
  background: #d3f0e0;
  border: 1px solid #86bfa0;
}
.pm-radio {
  width: 20px;
  height: 23px;
  margin-right: 13px;
  display: flex;
  align-items: center;
  justify-content: center;
}
.pm-radio.on { background: #85bf9d; }
.pm-radio i {
  width: 7px;
  height: 7px;
  background: #fff;
  border: 1px solid #666;
  border-radius: 50%;
}
.pm-radio i.dot { background: #666; box-shadow: inset 0 0 0 1.500px #fff; }
.red-box {
  position: absolute;
  left: 979px;
  top: 773px;
  width: 219px;
  height: 44px;
  box-sizing: border-box;
  border: 10px solid #ed1c24;
  border-radius: 20px;
}
.red-arrow {
  position: absolute;
  left: 1135px;
  top: 812px;
}
.watermark {
  position: absolute;
  left: 1473px;
  top: 820px;
  filter: blur(.5px);
}
.wm {
  fill: rgba(255, 255, 255, .8);
  stroke: #d6d6d6;
  stroke-width: 1.500;
}
.wm-big { font: bold 80px "Liberation Sans", sans-serif; letter-spacing: -4px; }
.wm-du { font: 36px "Liberation Sans", sans-serif; letter-spacing: 5px; }
.wm-cn { font: 700 56px "Noto Sans CJK SC", sans-serif; }
.wm-url { font: 42px "Liberation Sans", sans-serif; }
.handle {
  position: absolute;
  left: 1911px;
  top: 138px;
  width: 8px;
  height: 50px;
  box-sizing: border-box;
  background: linear-gradient(#fff 40%, #e8701a 40%);
  background-size: 2px 100%;
  background-repeat: no-repeat;
  background-position: center;
  border: 1.500px solid #8a8a8a;
  border-radius: 4px;
}
</style>
